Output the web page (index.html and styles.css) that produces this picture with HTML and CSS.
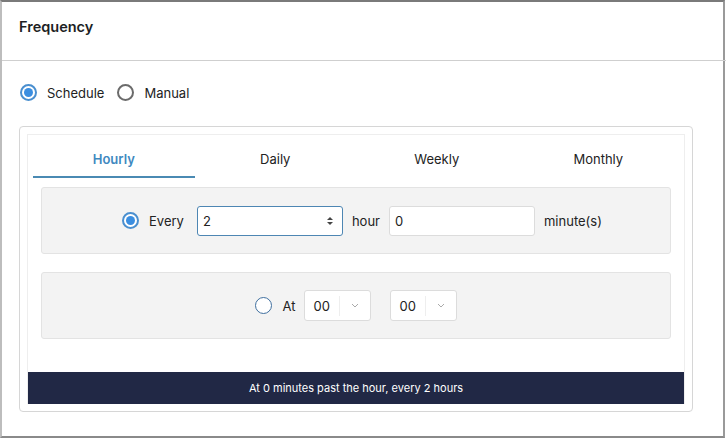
FILE: index.html
```html
<!DOCTYPE html>
<html lang="en">
  <head>
    <meta charset="UTF-8" />
    <title>Frequency</title>
    <link rel="stylesheet" href="styles.css">
  </head>
  <body>
    <div class="panel">
      <div class="panel-header">Frequency</div>

      <div class="mode-row">
        <label class="radio-option">
          <span class="radio checked"></span>
          <span>Schedule</span>
        </label>
        <label class="radio-option">
          <span class="radio"></span>
          <span>Manual</span>
        </label>
      </div>

      <div class="card">
        <div class="card-inner">
          <div class="tabs">
            <div class="tab active">Hourly</div>
            <div class="tab">Daily</div>
            <div class="tab">Weekly</div>
            <div class="tab">Monthly</div>
          </div>

          <div class="option-box every">
            <span class="radio checked"></span>
            <span class="option-label lead">Every</span>
            <div class="field number focused">
              <span>2</span>
              <svg class="spinner" width="8" height="10" viewBox="0 0 8 10">
                <path d="M4 1 L7 4 H1 Z" fill="#444" />
                <path d="M4 9 L7 6 H1 Z" fill="#444" />
              </svg>
            </div>
            <span class="option-label">hour</span>
            <div class="field number"><span>0</span></div>
            <span class="option-label">minute(s)</span>
          </div>

          <div class="option-box at">
            <span class="radio outline"></span>
            <span class="option-label">At</span>
            <div class="select">
              <span class="select-value">00</span>
              <span class="select-arrow">
                <svg width="8" height="5" viewBox="0 0 8 5">
                  <path d="M1 1 L4 4 L7 1" fill="none" stroke="#aaa" stroke-width="1" />
                </svg>
              </span>
            </div>
            <div class="select">
              <span class="select-value">00</span>
              <span class="select-arrow">
                <svg width="8" height="5" viewBox="0 0 8 5">
                  <path d="M1 1 L4 4 L7 1" fill="none" stroke="#aaa" stroke-width="1" />
                </svg>
              </span>
            </div>
          </div>

          <div class="summary">At 0 minutes past the hour, every 2 hours</div>
        </div>
      </div>
    </div>
  </body>
</html>
```

FILE: styles.css
```css
* {
  margin: 0;
  padding: 0;
  box-sizing: border-box;
  font-family: Inter, "Noto Sans", sans-serif;
}

body {
  background-color: #fff;
  color: #222;
  font-size: 13px;
}

.panel {
  width: 725px;
  height: 438px;
  border: 2px solid #bdbdbd;
  border-top-color: #7a7a7a;
  border-right-color: #9a9a9a;
  border-bottom-color: #8a8a8a;
  background-color: #fff;
}

.panel-header {
  height: 59px;
  padding: 16px 17px;
  font-size: 14.5px;
  font-weight: 600;
  color: #1d1f24;
  border-bottom: 1px solid #cfcfcf;
  margin-right: -4px;
}

.mode-row {
  display: flex;
  align-items: center;
  gap: 13px;
  padding: 23px 18px 25px;
}

.radio-option {
  display: flex;
  align-items: center;
  gap: 10px;
}

.radio {
  width: 17px;
  height: 17px;
  border-radius: 50%;
  border: 2px solid #6b6b6b;
  background-color: #fff;
  flex-shrink: 0;
  display: flex;
  justify-content: center;
  align-items: center;
}

.radio.checked {
  border-color: #4a8fcf;
}

.radio.checked::after {
  content: '';
  width: 9px;
  height: 9px;
  border-radius: 50%;
  background-color: #3b8ee0;
}

.radio.outline {
  border: 1.5px solid #3f6f9f;
}

.card {
  margin: 0 30px 0 17px;
  padding: 7px;
  border: 1px solid #d6d6d6;
  border-radius: 4px;
}

.card-inner {
  border: 1px solid #eeeeee;
  border-bottom: none;
}

.tabs {
  display: grid;
  grid-template-columns: repeat(4, 1fr);
  padding: 6px 5px 0;
}

.tab {
  height: 37px;
  display: flex;
  justify-content: center;
  align-items: center;
  border-bottom: 2px solid transparent;
  color: #222;
}

.tab.active {
  color: #3f89bf;
  font-weight: 600;
  border-bottom-color: #4a8ab3;
}

.option-box {
  margin: 9px 13px 0;
  height: 67px;
  background-color: #f3f3f3;
  border: 1px solid #e3e3e3;
  border-radius: 3px;
  display: flex;
  justify-content: center;
  align-items: center;
  gap: 9px;
}

.option-box.every {
  padding-left: 12px;
}

.option-box.every .radio {
  margin-right: 1px;
}

.option-box.every .lead {
  margin-right: 4px;
}

.option-box.at {
  margin-top: 18px;
}

.option-box.at .radio {
  margin-right: 2px;
}

.field {
  height: 30px;
  width: 146px;
  background-color: #fff;
  border: 1px solid #dcdcdc;
  border-radius: 3px;
  display: flex;
  align-items: center;
  justify-content: space-between;
  padding: 0 8px 0 5px;
}

.field.focused {
  border-color: #4d86b3;
}

.select {
  height: 31px;
  width: 67px;
  background-color: #fff;
  border: 1px solid #dcdcdc;
  border-radius: 3px;
  display: flex;
  align-items: center;
}

.select + .select {
  margin-left: 10px;
}

.select-value {
  width: 35px;
  padding-left: 8px;
  border-right: 1px solid #eeeeee;
  line-height: 20px;
}

.select-arrow {
  flex: 1;
  display: flex;
  justify-content: center;
}

.summary {
  margin-top: 33px;
  height: 32px;
  background-color: #212845;
  color: #fff;
  font-size: 11px;
  display: flex;
  justify-content: center;
  align-items: center;
}
```
